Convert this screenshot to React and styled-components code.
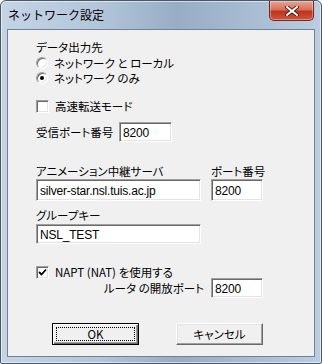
import React from "react";
import styled, { createGlobalStyle } from "styled-components";

const Global = createGlobalStyle`
  html, body { margin: 0; padding: 0; background: #ffffff; }
  body {
    font-family: "Noto Sans CJK JP", "Liberation Sans", sans-serif;
    font-size: 12px;
  }
`;

const Window = styled.div`
  box-sizing: border-box;
  width: 322px;
  height: 364px;
  border: 1px solid #4a5866;
  border-radius: 6px 6px 2px 2px;
  background: linear-gradient(90deg, #c4d4e5 0%, #b3c6da 30%, #98adc4 55%, #a9bdd3 80%, #bccde0 100%);
  padding: 0 6px 6px 6px;
  display: flex;
  flex-direction: column;
  box-shadow: inset 0 0 0 1px rgba(255, 255, 255, 0.55);
`;

const TitleBar = styled.div`
  height: 28px;
  display: flex;
  align-items: flex-start;
  justify-content: space-between;
`;

const Title = styled.div`
  font-family: "Noto Sans CJK JP", sans-serif;
  font-size: 12px;
  color: #000;
  padding: 7px 0 0 1px;
  line-height: 14px;
`;

const CloseButton = styled.div`
  box-sizing: border-box;
  width: 45px;
  height: 20px;
  margin-right: 1px;
  border: 1px solid #6b2a22;
  border-top: none;
  border-radius: 0 0 5px 5px;
  background: linear-gradient(180deg, #e8a593 0%, #d8705a 45%, #c1321d 55%, #d0553c 100%);
  box-shadow: inset 0 0 0 1px rgba(255, 255, 255, 0.35);
  display: flex;
  align-items: center;
  justify-content: center;
`;

const Client = styled.div`
  flex: 1;
  border: 1px solid #6f8194;
  background: #f0f0f0;
  padding: 8px 0 0 28px;
  display: flex;
  flex-direction: column;
  font-family: "Noto Sans CJK JP", "Liberation Sans", sans-serif;
  font-feature-settings: "palt" 1;
  font-size: 11.5px;
  line-height: 14px;
  color: #000;
`;

const Label = styled.div`
  line-height: 14px;
  margin-top: ${(p) => p.$mt || 0}px;
  width: ${(p) => (p.$w ? `${p.$w}px` : "auto")};
  white-space: nowrap;
`;

const OptionRow = styled.label`
  display: flex;
  align-items: center;
  height: 14px;
  line-height: 14px;
  margin-top: ${(p) => p.$mt || 0}px;
  gap: 6px;
  white-space: nowrap;
`;

const Radio = styled.span`
  box-sizing: border-box;
  width: 12px;
  height: 12px;
  border-radius: 50%;
  border: 1px solid;
  border-color: #a0a0a0 #ffffff #ffffff #a0a0a0;
  background: #fff;
  box-shadow: inset 1px 1px 0 #696969, inset -1px -1px 0 #e3e3e3;
  display: flex;
  align-items: center;
  justify-content: center;
  &::after {
    content: "";
    width: 4px;
    height: 4px;
    border-radius: 50%;
    background: ${(p) => (p.$on ? "#000" : "transparent")};
  }
`;

const Check = styled.span`
  box-sizing: border-box;
  width: 13px;
  height: 13px;
  border: 1px solid;
  border-color: #a0a0a0 #ffffff #ffffff #a0a0a0;
  background: #fff;
  box-shadow: inset 1px 1px 0 #696969, inset -1px -1px 0 #e3e3e3;
  display: flex;
  align-items: center;
  justify-content: center;
`;

const Field = styled.div`
  box-sizing: border-box;
  width: ${(p) => p.$w}px;
  height: ${(p) => p.$h || 21}px;
  border: 1px solid;
  border-color: #a0a0a0 #ffffff #ffffff #a0a0a0;
  box-shadow: inset 1px 1px 0 #696969, inset -1px -1px 0 #e3e3e3;
  background: #fff;
  padding: 1px 0 0 3px;
  display: flex;
  align-items: center;
  font-family: "Liberation Sans", sans-serif;
  font-size: 12px;
  letter-spacing: -0.2px;
  white-space: nowrap;
  overflow: hidden;
`;

const Row = styled.div`
  display: flex;
  align-items: ${(p) => p.$align || "center"};
  gap: ${(p) => p.$gap || 0}px;
  margin-top: ${(p) => p.$mt || 0}px;
`;

const Col = styled.div`
  display: flex;
  flex-direction: column;
  gap: ${(p) => p.$gap || 0}px;
  margin-top: ${(p) => p.$mt || 0}px;
`;

const RightLabel = styled.div`
  width: ${(p) => p.$w}px;
  text-align: right;
  line-height: 14px;
  white-space: nowrap;
`;

const Buttons = styled.div`
  display: flex;
  gap: 37px;
  margin-top: ${(p) => p.$mt || 0}px;
  margin-left: 16px;
`;

const Button = styled.div`
  box-sizing: border-box;
  width: 87px;
  height: 22px;
  background: #f0f0f0;
  border: 1px solid;
  border-color: ${(p) => (p.$default ? "#000" : "#fff #696969 #696969 #fff")};
  box-shadow: ${(p) =>
    p.$default
      ? "inset 1px 1px 0 #fff, inset -1px -1px 0 #696969, inset -2px -2px 0 #a0a0a0"
      : "inset -1px -1px 0 #a0a0a0, inset 1px 1px 0 #e3e3e3"};
  display: flex;
  align-items: center;
  justify-content: center;
  padding: ${(p) => (p.$default ? "3px" : "0")};
`;

const Focus = styled.div`
  box-sizing: border-box;
  width: 100%;
  height: 100%;
  border: 1px dotted #000;
  display: flex;
  align-items: center;
  justify-content: center;
  line-height: 14px;
`;

const CloseGlyph = () => (
  <svg width="14" height="10" viewBox="0 0 14 10">
    <path d="M2 1 L12 9 M12 1 L2 9" stroke="#3a0f08" strokeWidth="3.6" strokeLinecap="square" />
    <path d="M2 1 L12 9 M12 1 L2 9" stroke="#ffffff" strokeWidth="2" strokeLinecap="square" />
  </svg>
);

const CheckMark = () => (
  <svg width="9" height="9" viewBox="0 0 9 9">
    <path d="M1 4 L3.5 6.5 L8 1.5" stroke="#000" strokeWidth="1.8" fill="none" />
  </svg>
);

export default function App() {
  return (
    <>
      <Global />
      <Window>
        <TitleBar>
          <Title>ネットワーク設定</Title>
          <CloseButton>
            <CloseGlyph />
          </CloseButton>
        </TitleBar>
        <Client>
          <Label $mt={2}>データ出力先</Label>
          <OptionRow $mt={2}>
            <Radio />
            ネットワーク と ローカル
          </OptionRow>
          <OptionRow $mt={1}>
            <Radio $on />
            ネットワーク のみ
          </OptionRow>
          <OptionRow $mt={14}>
            <Check />
            高速転送モード
          </OptionRow>
          <Row $mt={9} $gap={7}>
            <Label $w={76}>受信ポート番号</Label>
            <Field $w={53} $h={20}>8200</Field>
          </Row>
          <Row $mt={22} $gap={10} $align="flex-start">
            <Col $gap={1}>
              <Label>アニメーション中継サーバ</Label>
              <Field $w={165} $h={22}>silver-star.nsl.tuis.ac.jp</Field>
            </Col>
            <Col $gap={1}>
              <Label>ポート番号</Label>
              <Field $w={52} $h={22}>8200</Field>
            </Col>
          </Row>
          <Col $gap={2} $mt={7}>
            <Label>グループキー</Label>
            <Field $w={165} $h={20}>NSL_TEST</Field>
          </Col>
          <OptionRow $mt={21}>
            <Check>
              <CheckMark />
            </Check>
            NAPT (NAT) を使用する
          </OptionRow>
          <Row $mt={-1} $gap={7}>
            <RightLabel $w={168}>ルータ の開放ポート</RightLabel>
            <Field $w={52} $h={20}>8200</Field>
          </Row>
          <Buttons $mt={25}>
            <Button $default>
              <Focus>OK</Focus>
            </Button>
            <Button>キャンセル</Button>
          </Buttons>
        </Client>
      </Window>
    </>
  );
}
